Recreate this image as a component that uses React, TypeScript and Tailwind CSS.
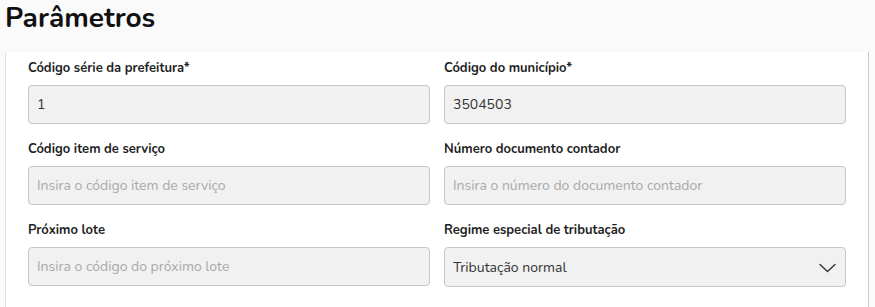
interface FieldProps {
  label: string
  value?: string
  placeholder?: string
}

function Field({ label, value, placeholder }: FieldProps) {
  return (
    <div className="flex flex-col">
      <label className="h-[33px] pt-[7px] text-[13px] font-bold leading-[18px] text-[#1f1f1f]">{label}</label>
      <input
        readOnly
        value={value ?? ''}
        placeholder={placeholder}
        className="h-[39px] rounded-[4px] border border-[#c6c6c6] bg-[#f1f1f1] px-[8px] text-[14px] text-[#333] outline-none placeholder:text-[#a9a9a9]"
      />
    </div>
  )
}

function SelectField({ label, value }: { label: string; value: string }) {
  return (
    <div className="flex flex-col">
      <label className="h-[33px] pt-[7px] text-[13px] font-bold leading-[18px] text-[#1f1f1f]">{label}</label>
      <div className="flex h-[40px] items-center justify-between rounded-[4px] border border-[#c6c6c6] bg-[#f1f1f1] pl-[8px] pr-[9px] text-[14px] text-[#333]">
        <span>{value}</span>
        {/* seta do select */}
        <svg width="17" height="10" viewBox="0 0 17 10" fill="none" className="mt-[1px]">
          <path d="M1 1.5 L8.5 8.5 L16 1.5" stroke="#333" strokeWidth="1.4" strokeLinecap="round" strokeLinejoin="round" />
        </svg>
      </div>
    </div>
  )
}

export default function App() {
  return (
    <div className="h-[307px] overflow-hidden bg-[#fafafa] font-['Nunito','Lato',sans-serif]">
      {/* título */}
      <div className="h-[52px] pl-[5px]">
        <h1 className="text-[28px] font-bold leading-[36px] text-[#111]">Parâmetros</h1>
      </div>

      {/* cartão de parâmetros */}
      <div className="ml-[5px] mr-[6px] h-[255px] border-l border-r border-l-[#e0e0e0] border-r-[#c8c8c8] bg-white px-[22px]">
        <div className="grid grid-cols-2 gap-x-[14px] gap-y-[9px]">
          <Field label="Código série da prefeitura*" value="1" />
          <Field label="Código do município*" value="3504503" />
          <Field label="Código item de serviço" placeholder="Insira o código item de serviço" />
          <Field label="Número documento contador" placeholder="Insira o número do documento contador" />
          <Field label="Próximo lote" placeholder="Insira o código do próximo lote" />
          <SelectField label="Regime especial de tributação" value="Tributação normal" />
        </div>
      </div>
    </div>
  )
}
